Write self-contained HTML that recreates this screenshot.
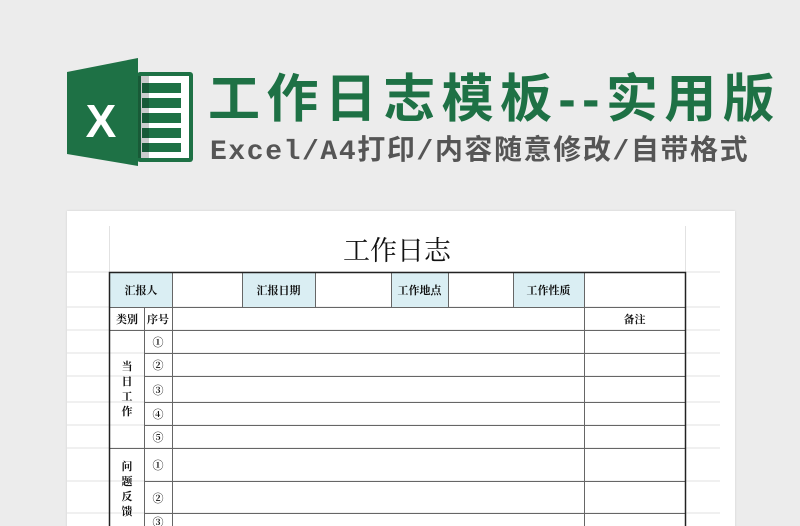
<!DOCTYPE html>
<html><head><meta charset="utf-8"><style>
html,body{margin:0;width:800px;height:526px;overflow:hidden}
body{background:#ececec;position:relative;font-family:"Liberation Sans","Noto Sans CJK SC",sans-serif}
.a{position:absolute}
.t{position:absolute;font-family:"Liberation Serif","Noto Serif CJK SC",serif;font-weight:bold;font-size:11px;display:flex;align-items:center;justify-content:center;color:#111}
</style></head><body>
<svg class="a" style="left:60px;top:50px" width="140" height="130" viewBox="60 50 140 130">
<rect x="137" y="72" width="56" height="90" rx="3" fill="#1e7145"/>
<rect x="141" y="76" width="48" height="82" fill="#fff"/>
<g fill="#1e7145">
<rect x="142" y="83" width="20" height="10"/><rect x="162" y="83" width="19" height="10"/>
<rect x="142" y="98" width="20" height="10"/><rect x="162" y="98" width="19" height="10"/>
<rect x="142" y="113" width="20" height="10"/><rect x="162" y="113" width="19" height="10"/>
<rect x="142" y="128" width="20" height="10"/><rect x="162" y="128" width="19" height="10"/>
<rect x="142" y="143" width="20" height="9"/><rect x="162" y="143" width="19" height="9"/>
</g>
<rect x="137" y="76" width="12" height="82" fill="#000" opacity=".2"/>
<polygon points="67,72 138,58 138,166 67,154" fill="#1e7145"/>
<text x="101" y="137" font-family="Liberation Sans" font-weight="bold" font-size="46" fill="#fff" text-anchor="middle">X</text>
</svg>
<div class="a" style="left:208px;top:70px;font-size:52px;font-weight:bold;color:#1e7145;letter-spacing:6.4px;white-space:nowrap;line-height:60px">工作日志模板--实用版</div>
<div class="a" style="left:210px;top:135px;font-family:'Liberation Mono','Noto Sans CJK SC',sans-serif;font-size:28px;font-weight:bold;color:#555;letter-spacing:1.6px;white-space:nowrap;line-height:36px">Excel/A4打印/内容随意修改/自带格式</div>
<div class="a" style="left:67px;top:211px;width:668px;height:320px;background:#fff;box-shadow:0 0 2px #ccc"></div>
<svg class="a" style="left:0;top:0" width="800" height="526">
<g stroke="#e2e2e2" stroke-width="1">
<line x1="67" y1="272" x2="720" y2="272"/><line x1="67" y1="307" x2="720" y2="307"/><line x1="67" y1="330" x2="720" y2="330"/><line x1="67" y1="353" x2="720" y2="353"/><line x1="67" y1="376" x2="720" y2="376"/><line x1="67" y1="402" x2="720" y2="402"/><line x1="67" y1="425" x2="720" y2="425"/><line x1="67" y1="448" x2="720" y2="448"/><line x1="67" y1="481" x2="720" y2="481"/><line x1="67" y1="513" x2="720" y2="513"/>
<line x1="109.5" y1="226" x2="109.5" y2="272"/><line x1="685.5" y1="226" x2="685.5" y2="272"/>
</g>
<g fill="#daeef3"><rect x="110" y="273" width="62" height="34"/><rect x="242" y="273" width="73" height="34"/><rect x="391" y="273" width="57" height="34"/><rect x="513" y="273" width="71" height="34"/></g>
<g stroke="#666" stroke-width="1">
<line x1="172.5" y1="272" x2="172.5" y2="526"/><line x1="242.5" y1="272" x2="242.5" y2="307"/><line x1="315.5" y1="272" x2="315.5" y2="307"/><line x1="391.5" y1="272" x2="391.5" y2="307"/><line x1="448.5" y1="272" x2="448.5" y2="307"/><line x1="513.5" y1="272" x2="513.5" y2="307"/><line x1="584.5" y1="272" x2="584.5" y2="526"/>
<line x1="144.5" y1="307" x2="144.5" y2="526"/>
<line x1="144" y1="353.5" x2="685" y2="353.5"/><line x1="144" y1="376.5" x2="685" y2="376.5"/><line x1="144" y1="402.5" x2="685" y2="402.5"/><line x1="144" y1="425.5" x2="685" y2="425.5"/><line x1="144" y1="481.5" x2="685" y2="481.5"/><line x1="144" y1="513.5" x2="685" y2="513.5"/>
<line x1="109" y1="307.5" x2="685" y2="307.5"/><line x1="109" y1="330.5" x2="685" y2="330.5"/><line x1="109" y1="448.5" x2="685" y2="448.5"/>
</g>
<g stroke="#222" stroke-width="1.5" fill="none"><rect x="109.5" y="272.5" width="576" height="260"/></g>
</svg>
<div class="a" style="left:300px;top:234px;width:194px;text-align:center;font-family:'Liberation Serif','Noto Serif CJK SC',serif;font-size:27px;color:#111;line-height:34px">工作日志</div>
<div class="t" style="left:110px;top:273px;width:62px;height:34px">汇报人</div>
<div class="t" style="left:242px;top:273px;width:73px;height:34px">汇报日期</div>
<div class="t" style="left:391px;top:273px;width:57px;height:34px">工作地点</div>
<div class="t" style="left:513px;top:273px;width:71px;height:34px">工作性质</div>
<div class="t" style="left:110px;top:308px;width:34px;height:22px">类别</div>
<div class="t" style="left:144px;top:308px;width:28px;height:22px">序号</div>
<div class="t" style="left:584px;top:308px;width:101px;height:22px">备注</div>
<div class="t" style="left:110px;top:331px;width:34px;height:117px;line-height:15px;flex-direction:column">当<br>日<br>工<br>作</div>
<div class="t" style="left:110px;top:460px;width:34px;height:66px;line-height:15px;flex-direction:column;justify-content:flex-start">问<br>题<br>反<br>馈</div>
<div class="t" style="left:144px;top:331px;width:28px;height:22px">①</div>
<div class="t" style="left:144px;top:354px;width:28px;height:22px">②</div>
<div class="t" style="left:144px;top:377px;width:28px;height:25px">③</div>
<div class="t" style="left:144px;top:403px;width:28px;height:22px">④</div>
<div class="t" style="left:144px;top:426px;width:28px;height:22px">⑤</div>
<div class="t" style="left:144px;top:449px;width:28px;height:32px">①</div>
<div class="t" style="left:144px;top:482px;width:28px;height:31px">②</div>
<div class="t" style="left:144px;top:514px;width:28px;height:12px;overflow:hidden;align-items:flex-start">③</div>
</body></html>
